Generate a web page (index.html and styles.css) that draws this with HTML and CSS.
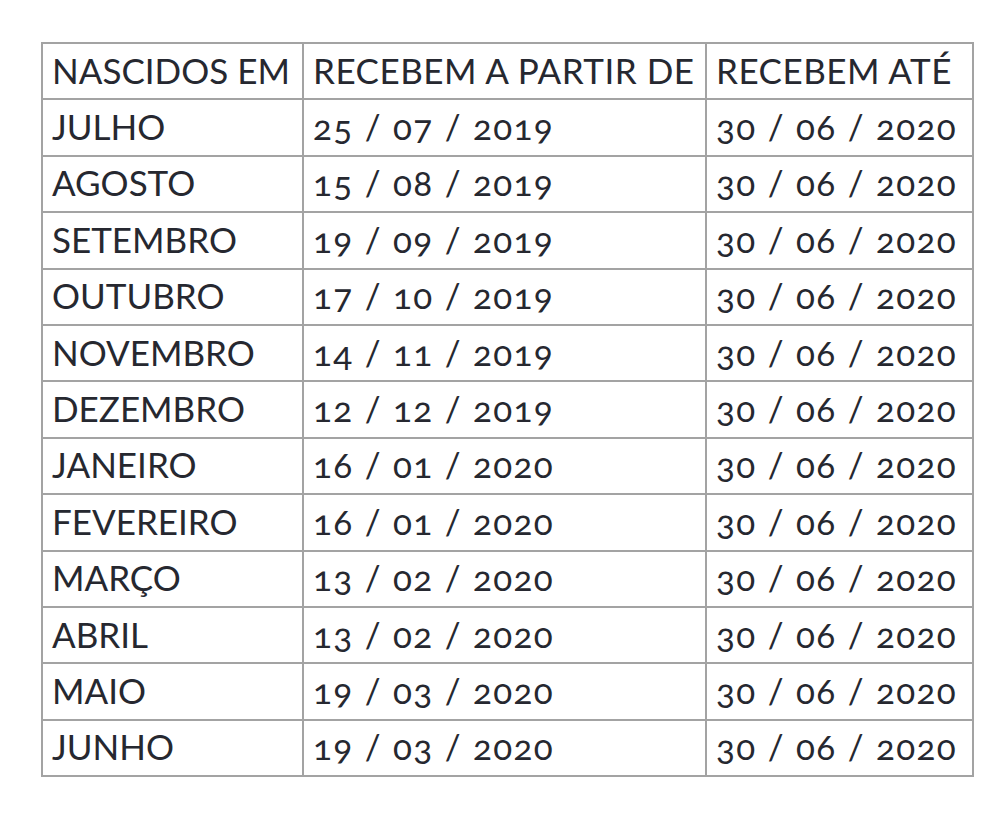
FILE: index.html
```html
<!DOCTYPE html>
<html lang="pt">
<head>
<meta charset="utf-8">
<title>Calendário</title>
<link rel="stylesheet" href="styles.css">
</head>
<body>
<table class="cal">
  <colgroup><col class="c1"><col class="c2"><col class="c3"></colgroup>
  <tr class="head"><td>NASCIDOS EM</td><td>RECEBEM A PARTIR DE</td><td>RECEBEM ATÉ</td></tr>
  <tr><td>JULHO</td><td class="d">25 / 07 / 2019</td><td class="d">30 / 06 / 2020</td></tr>
  <tr><td>AGOSTO</td><td class="d">15 / 08 / 2019</td><td class="d">30 / 06 / 2020</td></tr>
  <tr><td>SETEMBRO</td><td class="d">19 / 09 / 2019</td><td class="d">30 / 06 / 2020</td></tr>
  <tr><td>OUTUBRO</td><td class="d">17 / 10 / 2019</td><td class="d">30 / 06 / 2020</td></tr>
  <tr><td>NOVEMBRO</td><td class="d">14 / 11 / 2019</td><td class="d">30 / 06 / 2020</td></tr>
  <tr><td>DEZEMBRO</td><td class="d">12 / 12 / 2019</td><td class="d">30 / 06 / 2020</td></tr>
  <tr><td>JANEIRO</td><td class="d">16 / 01 / 2020</td><td class="d">30 / 06 / 2020</td></tr>
  <tr><td>FEVEREIRO</td><td class="d">16 / 01 / 2020</td><td class="d">30 / 06 / 2020</td></tr>
  <tr><td>MARÇO</td><td class="d">13 / 02 / 2020</td><td class="d">30 / 06 / 2020</td></tr>
  <tr><td>ABRIL</td><td class="d">13 / 02 / 2020</td><td class="d">30 / 06 / 2020</td></tr>
  <tr><td>MAIO</td><td class="d">19 / 03 / 2020</td><td class="d">30 / 06 / 2020</td></tr>
  <tr><td>JUNHO</td><td class="d">19 / 03 / 2020</td><td class="d">30 / 06 / 2020</td></tr>
</table>
</body>
</html>
```
FILE: styles.css
```css
html, body {
  margin: 0;
  padding: 0;
  background: #ffffff;
}
body {
  padding: 42px 0 0 41px;
}
.cal {
  border-collapse: collapse;
  table-layout: fixed;
  width: 931px;
  font-family: Lato, "Noto Sans", sans-serif;
  font-size: 35px;
  color: #262830;
  font-variant-numeric: oldstyle-nums;
  font-feature-settings: "onum" 1;
}
.c1 { width: 261px; }
.c2 { width: 403px; }
.c3 { width: 267px; }
.cal td {
  border: 2px solid #a3a3a3;
  height: 56.4px;
  padding: 0 0 2px 9px;
  box-sizing: border-box;
  white-space: nowrap;
  vertical-align: middle;
  line-height: 1;
}
.head td + td {
  letter-spacing: 0.5px;
}
.cal td.d {
  letter-spacing: 1.3px;
  word-spacing: 1px;
}
```
